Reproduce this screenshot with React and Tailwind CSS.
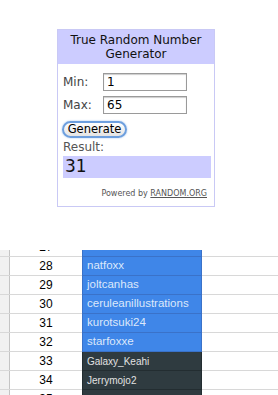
import React from "react";

const rows = [
  { n: 27, name: "the-weak", dark: false },
  { n: 28, name: "natfoxx", dark: false },
  { n: 29, name: "joltcanhas", dark: false },
  { n: 30, name: "ceruleanillustrations", dark: false },
  { n: 31, name: "kurotsuki24", dark: false },
  { n: 32, name: "starfoxxe", dark: false },
  { n: 33, name: "Galaxy_Keahi", dark: true },
  { n: 34, name: "Jerrymojo2", dark: true },
  { n: 35, name: "", dark: true },
];

function Generator() {
  return (
    <div className="ml-[57px] w-[158px] border border-[#c9c9f5] bg-white font-['DejaVu_Sans',Verdana,sans-serif]">
      <div className="flex h-[34px] flex-col items-center justify-center bg-[#ccccff] text-[12px] leading-[14px] text-[#111]">
        <span>True Random Number</span>
        <span>Generator</span>
      </div>
      <div className="px-[5px] pt-[9px] pb-[7px]">
        <div className="flex items-center">
          <span className="w-[40px] text-[12px] text-[#444]">Min:</span>
          <div className="flex h-[18px] w-[84px] items-center border border-[#9a9a9a] pl-[3px] text-[12px] text-black shadow-[inset_0_1px_1px_rgba(0,0,0,0.2)]">
            1
          </div>
        </div>
        <div className="mt-[5px] flex items-center">
          <span className="w-[40px] text-[12px] text-[#444]">Max:</span>
          <div className="flex h-[18px] w-[84px] items-center border border-[#9a9a9a] pl-[3px] text-[12px] text-black shadow-[inset_0_1px_1px_rgba(0,0,0,0.2)]">
            65
          </div>
        </div>
        <div className="mt-[7px] ml-[-1px] flex h-[17px] w-[65px] items-center justify-center rounded-full border-2 border-[#6d9fde] bg-gradient-to-b from-white to-[#e4e4e4] text-[11.5px] text-black shadow-[0_0_2px_#9cc0ee]">
          Generate
        </div>
        <div className="mt-[2px] text-[12px] leading-[15px] text-[#555]">Result:</div>
        <div className="mt-[1px] flex h-[22px] w-[148px] items-center bg-[#ccccff] pl-[2px] text-[17px] text-[#111]">
          31
        </div>
        <div className="mt-[10px] pr-[2px] text-right text-[8px] leading-[11px] text-[#555]">
          Powered by <span className="underline">RANDOM.ORG</span>
        </div>
      </div>
    </div>
  );
}

function Sheet() {
  return (
    <div className="mt-[43px] h-[148px] overflow-hidden font-['Liberation_Sans',Arial,sans-serif]">
      <div className="mt-[-12px]">
        {rows.map((r) => (
          <div key={r.n} className="flex h-[19px] border-b border-[#d8d8d8]">
            <div className="w-[10px] shrink-0 border-r border-[#c4c4c4] bg-[#f1f1f1]" />
            <div className="flex w-[72px] shrink-0 items-center justify-center text-[12px] text-black">
              {r.n}
            </div>
            <div
              className={
                r.dark
                  ? "-mb-px flex w-[120px] shrink-0 items-center border-b border-x border-[#232d31] bg-[#2f3b40] pl-[4px] text-[10px] text-[#e2e2e2]"
                  : "-mb-px flex w-[120px] shrink-0 items-center border-b border-x border-[#3a72c9] bg-[#3f86e8] pl-[4px] text-[11.5px] text-[#dce8fb]"
              }
            >
              {r.name}
            </div>
            <div className="flex-1" />
          </div>
        ))}
      </div>
    </div>
  );
}

export default function App() {
  return (
    <div className="h-[395px] w-[278px] overflow-hidden bg-white pt-[29px]">
      <Generator />
      <Sheet />
    </div>
  );
}
